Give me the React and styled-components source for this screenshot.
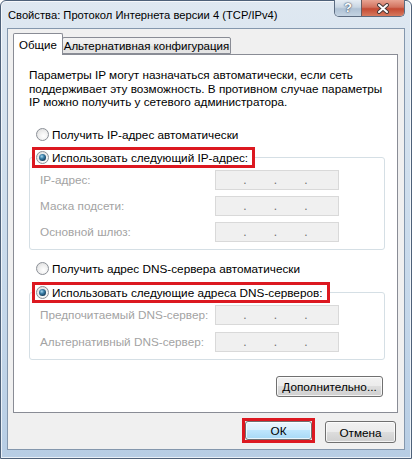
import styled, { createGlobalStyle } from "styled-components";

const GlobalStyle = createGlobalStyle`
  html, body {
    margin: 0;
    padding: 0;
  }
  body {
    width: 412px;
    height: 459px;
    overflow: hidden;
    background: #ffffff;
    font-family: "Liberation Sans", Arial, sans-serif;
    font-size: 11.75px;
    color: #000;
  }
`;

const Window = styled.div`
  box-sizing: border-box;
  width: 412px;
  height: 459px;
  display: flex;
  flex-direction: column;
  padding: 0 6px 8px;
  border: 1px solid #4e6179;
  border-radius: 6px 6px 0 0;
  background: linear-gradient(180deg, #dfe8f1 0%, #d3e1ee 30%, #c4d7ea 70%, #b7cde4 100%);
  box-shadow: inset 0 0 0 1px rgba(255, 255, 255, 0.7);
`;

const TitleBar = styled.div`
  height: 27px;
  display: flex;
  justify-content: space-between;
  align-items: flex-start;
`;

const Title = styled.div`
  margin: 6px 0 0 1px;
  font-size: 11.2px;
  line-height: 16px;
  color: #000;
  white-space: nowrap;
`;

const Caption = styled.div`
  display: flex;
  margin-top: -1px;
  border: 1px solid #5b6b80;
  border-top: none;
  border-radius: 0 0 5px 5px;
  overflow: hidden;
`;

const CaptionButton = styled.div`
  width: ${(p) => p.$w}px;
  height: 16px;
  display: flex;
  align-items: center;
  justify-content: center;
  background: ${(p) =>
    p.$close
      ? "linear-gradient(180deg, #e8a493 0%, #d2735f 45%, #c44a33 55%, #d67a5f 100%)"
      : "linear-gradient(180deg, #e6edf4 0%, #c9d6e3 45%, #afc1d4 55%, #c4d3e2 100%)"};
  border-left: ${(p) => (p.$close ? "1px solid #6a5c60" : "none")};
  color: #fff;
  font-weight: bold;
  font-size: 13px;
  line-height: 16px;
  text-shadow: 0 0 1px #34465c, 0 0 2px #34465c;
`;

const Client = styled.div`
  flex: 1;
  display: flex;
  flex-direction: column;
  padding: 4px 6px 6px 5px;
  background: #f0f0f0;
  border: 1px solid #8497ad;
`;

const TabStrip = styled.div`
  display: flex;
  align-items: flex-end;
  height: 21px;
  position: relative;
  z-index: 1;
`;

const Tab = styled.div`
  box-sizing: border-box;
  width: ${(p) => p.$w}px;
  height: ${(p) => (p.$active ? 22 : 17)}px;
  margin-bottom: ${(p) => (p.$active ? -1 : 0)}px;
  margin-left: ${(p) => (p.$active ? 0 : -1)}px;
  padding-top: ${(p) => (p.$active ? 4 : 1)}px;
  text-align: center;
  border: 1px solid #898c95;
  border-bottom: ${(p) => (p.$active ? "none" : "1px solid #898c95")};
  border-radius: 2px 2px 0 0;
  background: ${(p) =>
    p.$active ? "#ffffff" : "linear-gradient(180deg, #f3f3f3 0%, #ebebeb 50%, #dedede 51%, #e6e6e6 100%)"};
  font-size: 11.5px;
  line-height: 14px;
  white-space: nowrap;
`;

const Panel = styled.div`
  flex: 1;
  display: flex;
  flex-direction: column;
  padding: 13px 12px 15px 15px;
  background: #ffffff;
  border: 1px solid #898c95;
`;

const Description = styled.p`
  margin: 0;
  line-height: 13.5px;
  color: #000;
  white-space: nowrap;
`;

const RadioRow = styled.label`
  display: flex;
  align-items: center;
  gap: 3px;
  height: 16px;
  padding-left: 7px;
  margin-top: ${(p) => p.$top || 0}px;
  white-space: nowrap;
`;

const RadioDot = styled.span`
  box-sizing: border-box;
  width: 13px;
  height: 13px;
  flex: none;
  display: flex;
  align-items: center;
  justify-content: center;
  border-radius: 50%;
  border: 1px solid #8b9097;
  background: radial-gradient(circle at 60% 65%, #ffffff 0%, #f2f2f2 40%, #d8d8d8 100%);

  &::after {
    content: "";
    display: ${(p) => (p.$checked ? "block" : "none")};
    width: 7px;
    height: 7px;
    border-radius: 50%;
    background: radial-gradient(circle at 40% 35%, #a9d6ee 0%, #3b7fa8 35%, #163b59 75%, #0d2538 100%);
  }
`;

const Group = styled.fieldset`
  margin: ${(p) => p.$top}px 0 0 0;
  padding: 2px 0 7px 0;
  border: 1px solid #d5dfe5;
  border-radius: 3px;
  min-width: 0;
`;

const Legend = styled.legend`
  margin-left: 2px;
  padding: 0 4px 0 1px;
  height: 21px;
  box-sizing: border-box;
  display: flex;
  align-items: center;
  gap: 3px;
  border: 3px solid #dc1820;
  background: #ffffff;
  white-space: nowrap;
`;

const Fields = styled.div`
  display: grid;
  grid-template-columns: 175px 124px;
  row-gap: ${(p) => p.$gap}px;
  padding-left: 10px;
`;

const FieldLabel = styled.span`
  display: flex;
  align-items: center;
  height: 20px;
  color: #a3a3a3;
  white-space: nowrap;
`;

const IpBox = styled.div`
  box-sizing: border-box;
  height: 20px;
  display: flex;
  border: 1px solid #d9d9d9;
  background: #f0f0f0;
`;

const Octet = styled.span`
  flex: 1;
  display: flex;
  justify-content: flex-end;
  align-items: flex-end;
  padding-bottom: 3px;
  color: #6f6f6f;
  font-size: 12px;
  line-height: 12px;

  &:last-child {
    visibility: hidden;
  }
`;

const PanelActions = styled.div`
  display: flex;
  justify-content: flex-end;
  margin-top: auto;
  padding-right: 2px;
`;

const Button = styled.button`
  box-sizing: border-box;
  width: ${(p) => p.$w}px;
  height: ${(p) => p.$h || 21}px;
  padding: 0;
  border: 1px solid #707070;
  border-radius: 3px;
  background: ${(p) =>
    p.$default
      ? "linear-gradient(180deg, #eaf6fd 0%, #d9f0fc 49%, #bee6fd 50%, #a7d9f5 100%)"
      : "linear-gradient(180deg, #f2f2f2 0%, #ebebeb 49%, #dddddd 50%, #cfcfcf 100%)"};
  box-shadow: inset 0 0 0 1px rgba(255, 255, 255, 0.75);
  font-family: "Liberation Sans", Arial, sans-serif;
  font-size: 11.75px;
  color: #000;
`;

const Footer = styled.div`
  display: flex;
  justify-content: flex-end;
  align-items: flex-end;
  gap: 10px;
  margin-top: 5px;
  padding-right: 2px;
`;

const Highlight = styled.div`
  display: flex;
  border: 3px solid #dc1820;
`;

const Xicon = () => (
  <svg width="14" height="11" viewBox="0 0 14 11">
    <path d="M3 2 L11 9 M11 2 L3 9" stroke="#4a3a3a" strokeWidth="4" strokeLinecap="round" />
    <path d="M3 2 L11 9 M11 2 L3 9" stroke="#ffffff" strokeWidth="2" strokeLinecap="round" />
  </svg>
);

const IpField = () => (
  <IpBox>
    <Octet>.</Octet>
    <Octet>.</Octet>
    <Octet>.</Octet>
    <Octet>.</Octet>
  </IpBox>
);

const App = () => {
  return (
    <>
      <GlobalStyle />
      <Window>
        <TitleBar>
          <Title>Свойства: Протокол Интернета версии 4 (TCP/IPv4)</Title>
          <Caption>
            <CaptionButton $w={26}>?</CaptionButton>
            <CaptionButton $w={42} $close>
              <Xicon />
            </CaptionButton>
          </Caption>
        </TitleBar>
        <Client>
          <TabStrip>
            <Tab $active $w={50}>
              Общие
            </Tab>
            <Tab $w={169}>Альтернативная конфигурация</Tab>
          </TabStrip>
          <Panel>
            <Description>
              Параметры IP могут назначаться автоматически, если сеть
              <br />
              поддерживает эту возможность. В противном случае параметры
              <br />
              IP можно получить у сетевого администратора.
            </Description>
            <RadioRow $top={18}>
              <RadioDot />
              Получить IP-адрес автоматически
            </RadioRow>
            <Group $top={4}>
              <Legend>
                <RadioDot $checked />
                Использовать следующий IP-адрес:
              </Legend>
              <Fields $gap={6}>
                <FieldLabel>IP-адрес:</FieldLabel>
                <IpField />
                <FieldLabel>Маска подсети:</FieldLabel>
                <IpField />
                <FieldLabel>Основной шлюз:</FieldLabel>
                <IpField />
              </Fields>
            </Group>
            <RadioRow $top={11}>
              <RadioDot />
              Получить адрес DNS-сервера автоматически
            </RadioRow>
            <Group $top={5}>
              <Legend>
                <RadioDot $checked />
                Использовать следующие адреса DNS-серверов:
              </Legend>
              <Fields $gap={7}>
                <FieldLabel>Предпочитаемый DNS-сервер:</FieldLabel>
                <IpField />
                <FieldLabel>Альтернативный DNS-сервер:</FieldLabel>
                <IpField />
              </Fields>
            </Group>
            <PanelActions>
              <Button $w={107} $h={21}>
                Дополнительно...
              </Button>
            </PanelActions>
          </Panel>
          <Footer>
            <Highlight>
              <Button $w={67} $h={19} $default>
                ОК
              </Button>
            </Highlight>
            <Button $w={71} $h={22}>
              Отмена
            </Button>
          </Footer>
        </Client>
      </Window>
    </>
  );
};

export default App;
